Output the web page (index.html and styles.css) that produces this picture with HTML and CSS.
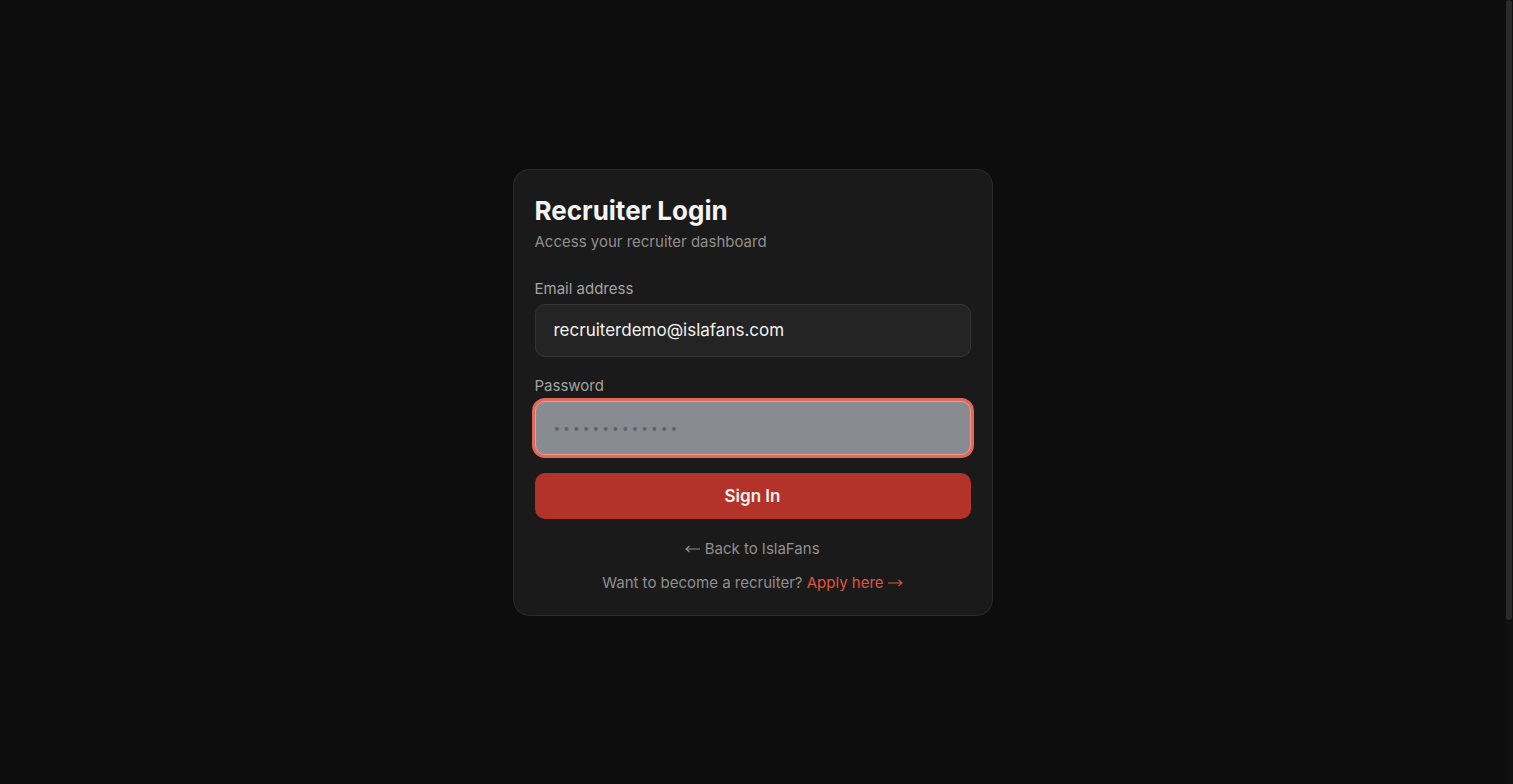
FILE: index.html
```html
<!DOCTYPE html>
<html lang="en">
<head>
    <meta charset="UTF-8">
    <meta name="viewport" content="width=device-width, initial-scale=1.0">
    <title>Recruiter Login</title>
    <link rel="stylesheet" href="styles.css">
</head>
<body>
    <div class="page">
        <div class="login-card">
            <h1>Recruiter Login</h1>
            <p class="subtitle">Access your recruiter dashboard</p>
            <form class="login-form" onsubmit="return false">
                <div class="form-group">
                    <label for="email">Email address</label>
                    <input type="email" id="email" name="email" value="recruiterdemo@islafans.com">
                </div>
                <div class="form-group">
                    <label for="password">Password</label>
                    <input type="password" id="password" name="password" class="is-focused" value="recruiter1234" autofocus>
                </div>
                <button type="submit">Sign In</button>
            </form>
            <a class="back-link" href="#">
                <svg class="arrow" width="15" height="8" viewBox="0 0 15 8"><path d="M15 4H1M4.5 1L1 4l3.5 3" fill="none" stroke="currentColor" stroke-width="1.1"/></svg>
                Back to IslaFans
            </a>
            <p class="apply">Want to become a recruiter? <a href="#">Apply here <svg class="arrow" width="15" height="8" viewBox="0 0 15 8"><path d="M0 4h14M10.5 1L14 4l-3.5 3" fill="none" stroke="currentColor" stroke-width="1.1"/></svg></a></p>
        </div>
    </div>
    <div class="scrollbar"><div class="scrollbar-thumb"></div></div>
</body>
</html>
```

FILE: styles.css
```css
html,
body {
    margin: 0;
    padding: 0;
    background-color: #0d0d0d;
}

body {
    padding-right: 8px;
    font-family: Inter, "Noto Sans", sans-serif;
    color: #f2f2f2;
}

.page {
    min-height: 100vh;
    display: flex;
    justify-content: center;
    align-items: center;
}

/* the browser scrollbar of the screenshot */
.scrollbar {
    position: fixed;
    top: 0;
    right: 0;
    bottom: 0;
    width: 8px;
    background-color: #101010;
}

.scrollbar-thumb {
    height: 620px;
    margin: 0 1px;
    background-color: #2a2a2a;
    border-radius: 3px;
}

.login-card {
    width: 480px;
    box-sizing: border-box;
    padding: 23px 21px 21px;
    background-color: #1a1a1a;
    border: 1px solid #2a2a2a;
    border-radius: 16px;
}

.login-card h1 {
    margin: 0;
    font-size: 26px;
    font-weight: 700;
    line-height: 36px;
    color: #f5f5f5;
}

.subtitle {
    margin: 2px 0 0;
    font-size: 15px;
    line-height: 22px;
    color: #8f8f8f;
}

.login-form {
    margin-top: 25px;
}

.form-group {
    margin-bottom: 18px;
}

label {
    display: block;
    margin-bottom: 4px;
    font-size: 15px;
    line-height: 22px;
    color: #a3a3a3;
}

input {
    display: block;
    width: 100%;
    height: 53px;
    box-sizing: border-box;
    padding: 0 18px;
    font-family: inherit;
    font-size: 17px;
    color: #f2f2f2;
    background-color: #242424;
    border: 1px solid #353535;
    border-radius: 10px;
    outline: none;
}

input[type="password"] {
    height: 54px;
    color: #5f6268;
    caret-color: #5a5d63;
    letter-spacing: 3px;
    font-size: 12px;
}

input.is-focused {
    background-color: #888b91;
    border-color: #f49a8c;
    box-shadow: 0 0 0 3px #e1685a;
}

button {
    display: block;
    width: 100%;
    height: 46px;
    margin-top: 15px;
    font-family: inherit;
    font-size: 17px;
    font-weight: 600;
    color: #f7f0ee;
    background-color: #b3332a;
    border: none;
    border-radius: 10px;
    cursor: pointer;
}

.back-link {
    display: block;
    margin-top: 19px;
    text-align: center;
    font-size: 15px;
    line-height: 22px;
    color: #8f8f8f;
    text-decoration: none;
}

.apply {
    margin: 12px 0 0;
    text-align: center;
    font-size: 15px;
    line-height: 22px;
    color: #8f8f8f;
}

.apply a {
    color: #e0533f;
    text-decoration: none;
}

.arrow {
    vertical-align: 1px;
}
```
